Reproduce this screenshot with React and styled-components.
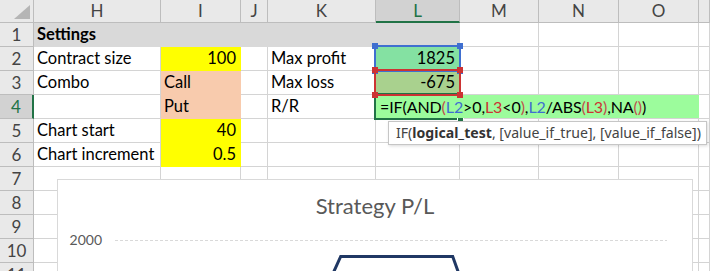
import React from 'react';
import styled, { createGlobalStyle } from 'styled-components';

const GlobalStyle = createGlobalStyle`
  *, *::before, *::after { box-sizing: border-box; }
  html, body { margin: 0; padding: 0; background: #fff; }
  body { font-family: Lato, "Liberation Sans", sans-serif; }
`;

const GRID = '#d4d4d4';
const HEAD_LINE = '#bdbdbd';
const HEAD_BG = '#e9e9e9';
const GREEN = '#217346';
const GRAY = '#d9d9d9';
const YELLOW = '#ffff00';
const PEACH = '#f8cbad';
const BLUE = '#3f6fd0';
const RED = '#cc3333';
const PAREN = '#c0504d';

const columns = ['H', 'I', 'J', 'K', 'L', 'M', 'N', 'O', ''];

const rows = [
  [{ t: 'Settings', bold: true, fill: GRAY }, { fill: GRAY }, { fill: GRAY }, { fill: GRAY }, { fill: GRAY }],
  [{ t: 'Contract size' }, { t: '100', right: true, fill: YELLOW }, {}, { t: 'Max profit' }, { t: '1825', right: true, fill: '#84e1a2' }],
  [{ t: 'Combo' }, { t: 'Call', fill: PEACH }, {}, { t: 'Max loss' }, { t: '-675', right: true, fill: '#a9d18e' }],
  [{}, { t: 'Put', fill: PEACH }, {}, { t: 'R/R' }],
  [{ t: 'Chart start' }, { t: '40', right: true, fill: YELLOW }],
  [{ t: 'Chart increment' }, { t: '0.5', right: true, fill: YELLOW }],
  [], [], [], [], [],
];

const Sheet = styled.div`
  position: relative;
  width: 710px;
  height: 271px;
  overflow: hidden;
  background: #fff;
`;

const Grid = styled.div`
  display: grid;
  grid-template-columns: 34px 127px 80px 27px 108px 84px 79px 80px 80px 1fr;
  grid-template-rows: 23px;
  grid-auto-rows: 24px;
  font-size: 16.5px;
  color: #000;
`;

/* same tracks as the sheet, holding the editor and the reference frames */
const OverlayGrid = styled(Grid)`
  position: absolute;
  inset: 0;
  pointer-events: none;
`;

const Corner = styled.div`
  position: relative;
  background: ${HEAD_BG};
  border-right: 1px solid ${HEAD_LINE};
  border-bottom: 1px solid ${HEAD_LINE};

  &::after {
    content: '';
    position: absolute;
    right: 3px;
    bottom: 3px;
    width: 16px;
    height: 14px;
    background: #b5b5b5;
    clip-path: polygon(100% 0, 100% 100%, 0 100%);
  }
`;

const ColHead = styled.div`
  background: ${p => (p.$active ? '#d2d2d2' : HEAD_BG)};
  color: ${p => (p.$active ? GREEN : '#444')};
  border-right: 1px solid ${HEAD_LINE};
  border-bottom: ${p => (p.$active ? `2px solid ${GREEN}` : `1px solid ${HEAD_LINE}`)};
  font-size: 17px;
  text-align: center;
  line-height: 22px;
`;

const RowHead = styled.div`
  background: ${p => (p.$active ? '#d2d2d2' : HEAD_BG)};
  color: ${p => (p.$active ? GREEN : '#444')};
  border-right: ${p => (p.$active ? `2px solid ${GREEN}` : `1px solid ${HEAD_LINE}`)};
  border-bottom: 1px solid ${HEAD_LINE};
  font-size: 17px;
  text-align: center;
  line-height: 23px;
`;

const Cell = styled.div`
  background: ${p => p.$fill || '#fff'};
  border-right: 1px solid ${p => p.$fill || GRID};
  border-bottom: 1px solid ${p => p.$fill || GRID};
  padding: 0 4px 0 3px;
  line-height: 23px;
  text-align: ${p => (p.$right ? 'right' : 'left')};
  font-weight: ${p => (p.$bold ? 700 : 400)};
  white-space: nowrap;
  overflow: hidden;
`;

/* in-cell editor for L4, spilling over M4:O4 */
const EditBox = styled.div`
  position: relative;
  grid-column: 6 / 10;
  grid-row: 5;
  background: #9cfc9c;
  padding-left: 4px;
  margin-bottom: 1px;
  font-size: 16px;
  line-height: 23px;
  letter-spacing: -0.1px;
  white-space: nowrap;
  overflow: hidden;
`;

const Token = styled.span`
  color: ${p => p.$c};
`;

const ActiveFrame = styled.div`
  position: relative;
  grid-column: 6;
  grid-row: 5;
  margin: -2px -1px -1px -2px;
  border: 2px solid ${GREEN};
`;

const FillHandle = styled.div`
  position: absolute;
  right: -5px;
  bottom: -5px;
  width: 7px;
  height: 7px;
  background: ${GREEN};
  border: 1px solid #fff;
`;

const RefBox = styled.div`
  position: relative;
  grid-column: 6;
  grid-row: ${p => p.$row};
  margin: -2px -1px -1px -2px;
  border: 2px solid ${p => p.$color};
`;

const Handle = styled.div`
  position: absolute;
  width: 6px;
  height: 6px;
  background: ${p => p.$color};
  ${p => (p.$top ? 'top: -4px;' : 'bottom: -4px;')}
  ${p => (p.$left ? 'left: -4px;' : 'right: -4px;')}
`;

const Tooltip = styled.div`
  position: absolute;
  left: 388px;
  top: 121px;
  width: 319px;
  height: 24px;
  background: #fff;
  border: 1px solid #c6c6c6;
  box-shadow: 1px 1px 3px rgba(0, 0, 0, 0.15);
  padding-left: 7px;
  font-family: "Noto Sans", "Open Sans", sans-serif;
  font-size: 14.1px;
  line-height: 22px;
  color: #444;
  white-space: nowrap;

  b { color: #333; }
`;

/* embedded chart object floating over the sheet */
const Chart = styled.div`
  position: absolute;
  left: 57px;
  top: 179px;
  width: 636px;
  height: 140px;
  background: #fff;
  border: 1px solid #d9d9d9;
  display: flex;
  flex-direction: column;
  align-items: center;
`;

const ChartTitle = styled.div`
  margin-top: 12px;
  font-size: 22px;
  font-weight: 400;
  line-height: 28px;
  color: #595959;
`;

const PlotRow = styled.div`
  align-self: stretch;
  margin-top: 12px;
  display: flex;
  align-items: flex-start;
  gap: 13px;
`;

const AxisLabel = styled.div`
  width: 44px;
  text-align: right;
  font-size: 14px;
  line-height: 16px;
  color: #595959;
`;

function Corners({ color }) {
  return (
    <>
      <Handle $color={color} $top $left />
      <Handle $color={color} $top />
      <Handle $color={color} $left />
      <Handle $color={color} />
    </>
  );
}

export default function App() {
  return (
    <>
      <GlobalStyle />
      <Sheet>
        <Grid>
          <Corner />
          {columns.map((c, i) => (
            <ColHead key={i} $active={c === 'L'}>{c}</ColHead>
          ))}
          {rows.map((row, r) => (
            <React.Fragment key={r}>
              <RowHead $active={r === 3}>{r + 1}</RowHead>
              {columns.map((_, c) => {
                const cell = row[c] || {};
                return (
                  <Cell key={c} $fill={cell.fill} $right={cell.right} $bold={cell.bold}>
                    {cell.t}
                  </Cell>
                );
              })}
            </React.Fragment>
          ))}
        </Grid>

        <Chart>
          <ChartTitle>Strategy P/L</ChartTitle>
          <PlotRow>
            <AxisLabel>2000</AxisLabel>
            <svg width="552" height="60" viewBox="0 0 552 60">
              <line x1="0" y1="8.5" x2="552" y2="8.5" stroke="#d9d9d9" strokeWidth="1" strokeDasharray="3 2" />
              <polyline
                points="210.5,58 225.7,24.5 337.7,24.5 349.7,58"
                fill="none"
                stroke="#203864"
                strokeWidth="3"
              />
            </svg>
          </PlotRow>
        </Chart>

        <OverlayGrid>
          <ActiveFrame>
            <FillHandle />
          </ActiveFrame>
          <EditBox>
            =IF(AND<Token $c={PAREN}>(</Token><Token $c={BLUE}>L2</Token>&gt;0,<Token $c={RED}>L3</Token>&lt;0<Token $c={PAREN}>)</Token>,<Token $c={BLUE}>L2</Token>/ABS<Token $c={PAREN}>(</Token><Token $c={RED}>L3</Token><Token $c={PAREN}>)</Token>,NA<Token $c={PAREN}>()</Token>)
          </EditBox>
          <RefBox $row={3} $color={BLUE}>
            <Corners color={BLUE} />
          </RefBox>
          <RefBox $row={4} $color={RED}>
            <Corners color={RED} />
          </RefBox>
        </OverlayGrid>

        <Tooltip>
          IF(<b>logical_test</b>, [value_if_true], [value_if_false])
        </Tooltip>
      </Sheet>
    </>
  );
}
